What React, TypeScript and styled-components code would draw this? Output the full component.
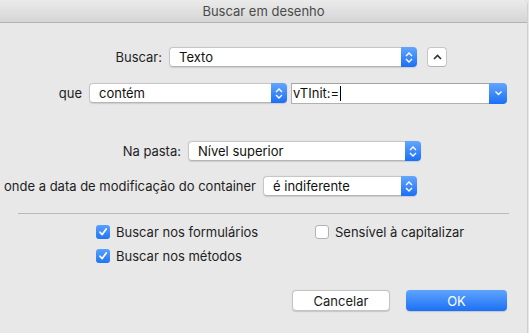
import React from 'react';
import styled, { createGlobalStyle } from 'styled-components';

const GlobalStyle = createGlobalStyle`
  html, body {
    margin: 0;
    padding: 0;
    background: #e8e8e8;
  }
  body {
    font-family: Inter, 'Liberation Sans', Arial, sans-serif;
    font-size: 13px;
    color: #262626;
  }
`;

// the sheet window
const Window = styled.div`
  width: 528px;
  height: 333px;
  box-sizing: border-box;
  background: #e8e8e8;
  border-right: 1px solid #cfcfcf;
  border-top-right-radius: 5px;
  overflow: hidden;
`;

const TitleBar = styled.div`
  height: 22px;
  border-bottom: 1px solid #b4b4b4;
  background: linear-gradient(#ebebeb, #d5d5d5);
  display: flex;
  align-items: center;
  justify-content: center;
  color: #4b4b4b;
  font-size: 13px;
`;

const Form = styled.div`
  display: flex;
  flex-direction: column;
`;

const FieldRow = styled.div<{ $top: number }>`
  display: flex;
  align-items: center;
  height: 20px;
  margin-top: ${(p) => p.$top}px;
`;

const Label = styled.div<{ $width: number }>`
  width: ${(p) => p.$width}px;
  margin-right: 7px;
  text-align: right;
  white-space: nowrap;
  color: #1e1e1e;
`;

// pop-up button: white face + blue stepper
const Popup = styled.div<{ $width: number }>`
  width: ${(p) => p.$width}px;
  height: 20px;
  display: flex;
  box-shadow: 0 0.5px 1px rgba(0, 0, 0, 0.12);
  border-radius: 4px;
`;

const PopupFace = styled.div`
  flex: 1;
  box-sizing: border-box;
  background: #fff;
  border: 1px solid #c6c6c6;
  border-right: none;
  border-bottom-color: #b5b5b5;
  border-radius: 4px 0 0 4px;
  padding-left: 9px;
  display: flex;
  align-items: center;
  color: #111;
`;

const BlueCap = styled.div`
  width: 16px;
  height: 20px;
  border-radius: 0 4px 4px 0;
  background: linear-gradient(#63a6fd, #1b6ff6);
  display: flex;
  align-items: center;
  justify-content: center;
`;

const Disclosure = styled.div`
  width: 20px;
  height: 20px;
  margin-left: 10px;
  box-sizing: border-box;
  background: #fff;
  border: 1px solid #c6c6c6;
  border-bottom-color: #b3b3b3;
  border-radius: 4px;
  display: flex;
  align-items: center;
  justify-content: center;
`;

const Combo = styled.div`
  width: 216px;
  height: 21px;
  margin-left: 4px;
  display: flex;
`;

const ComboField = styled.div`
  flex: 1;
  box-sizing: border-box;
  background: #fff;
  border: 1px solid #b0b0b0;
  border-right: none;
  border-top-color: #a3a3a3;
  padding-left: 1px;
  display: flex;
  align-items: center;
  color: #111;
`;

const Caret = styled.span`
  display: inline-block;
  width: 1px;
  height: 15px;
  background: #000;
  margin-left: 1px;
`;

const ComboCap = styled(BlueCap)`
  width: 18px;
  height: 21px;
`;

const Divider = styled.div`
  height: 1px;
  background: #b9b9b9;
  margin: 17px 18px 0 18px;
`;

const Options = styled.div`
  display: grid;
  grid-template-columns: 219px auto;
  row-gap: 10px;
  padding-left: 96px;
  margin-top: 11px;
`;

const CheckRow = styled.label`
  display: flex;
  align-items: center;
  height: 14px;
  white-space: nowrap;
  color: #1e1e1e;
`;

const Box = styled.span<{ $on: boolean }>`
  width: 14px;
  height: 14px;
  box-sizing: border-box;
  border-radius: 3px;
  margin-right: 6px;
  display: flex;
  align-items: center;
  justify-content: center;
  background: ${(p) => (p.$on ? 'linear-gradient(#5aa1fd, #1f73f7)' : '#fff')};
  border: ${(p) => (p.$on ? 'none' : '1px solid #b3b3b3')};
`;

const Buttons = styled.div`
  display: flex;
  justify-content: flex-end;
  gap: 16px;
  padding-right: 20px;
  margin-top: 27px;
`;

const Button = styled.div<{ $primary?: boolean }>`
  width: ${(p) => (p.$primary ? 101 : 98)}px;
  height: 21px;
  box-sizing: border-box;
  border-radius: 4px;
  display: flex;
  align-items: center;
  justify-content: center;
  background: ${(p) => (p.$primary ? 'linear-gradient(#5ea4fd, #1d70f6)' : '#fff')};
  color: ${(p) => (p.$primary ? '#fff' : '#1a1a1a')};
  border: ${(p) => (p.$primary ? 'none' : '1px solid #c4c4c4')};
  box-shadow: 0 0.5px 1px rgba(0, 0, 0, 0.15);
`;

const Stepper = () => (
  <svg width="8" height="13" viewBox="0 0 8 13">
    <path d="M1 5 L4 2 L7 5" fill="none" stroke="#fff" strokeWidth="1.4" />
    <path d="M1 8 L4 11 L7 8" fill="none" stroke="#fff" strokeWidth="1.4" />
  </svg>
);

const Check = () => (
  <svg width="10" height="10" viewBox="0 0 10 10">
    <path d="M2 5.2 L4.2 7.6 L8.2 2" fill="none" stroke="#fff" strokeWidth="1.7" strokeLinecap="round" strokeLinejoin="round" />
  </svg>
);

const PopupButton: React.FC<{ width: number; value: string }> = ({ width, value }) => (
  <Popup $width={width}>
    <PopupFace>{value}</PopupFace>
    <BlueCap>
      <Stepper />
    </BlueCap>
  </Popup>
);

const App: React.FC = () => {
  return (
    <>
      <GlobalStyle />
      <Window>
        <TitleBar>Buscar em desenho</TitleBar>
        <Form>
          <FieldRow $top={24}>
            <Label $width={162}>Buscar:</Label>
            <PopupButton width={248} value="Texto" />
            <Disclosure>
              <svg width="9" height="6" viewBox="0 0 9 6">
                <path d="M1 5 L4.5 1.5 L8 5" fill="none" stroke="#333" strokeWidth="1.6" />
              </svg>
            </Disclosure>
          </FieldRow>

          <FieldRow $top={16}>
            <Label $width={82}>que</Label>
            <PopupButton width={198} value="contém" />
            <Combo>
              <ComboField>
                vTInit:=<Caret />
              </ComboField>
              <ComboCap>
                <svg width="9" height="6" viewBox="0 0 9 6">
                  <path d="M1.5 1.5 L4.5 4.5 L7.5 1.5" fill="none" stroke="#fff" strokeWidth="1.4" />
                </svg>
              </ComboCap>
            </Combo>
          </FieldRow>

          <FieldRow $top={38}>
            <Label $width={181}>Na pasta:</Label>
            <PopupButton width={233} value="Nível superior" />
          </FieldRow>

          <FieldRow $top={15}>
            <Label $width={256}>onde a data de modificação do container</Label>
            <PopupButton width={154} value="é indiferente" />
          </FieldRow>

          <Divider />

          <Options>
            <CheckRow>
              <Box $on>
                <Check />
              </Box>
              Buscar nos formulários
            </CheckRow>
            <CheckRow>
              <Box $on={false} />
              Sensível à capitalizar
            </CheckRow>
            <CheckRow>
              <Box $on>
                <Check />
              </Box>
              Buscar nos métodos
            </CheckRow>
          </Options>

          <Buttons>
            <Button>Cancelar</Button>
            <Button $primary>OK</Button>
          </Buttons>
        </Form>
      </Window>
    </>
  );
};

export default App;
